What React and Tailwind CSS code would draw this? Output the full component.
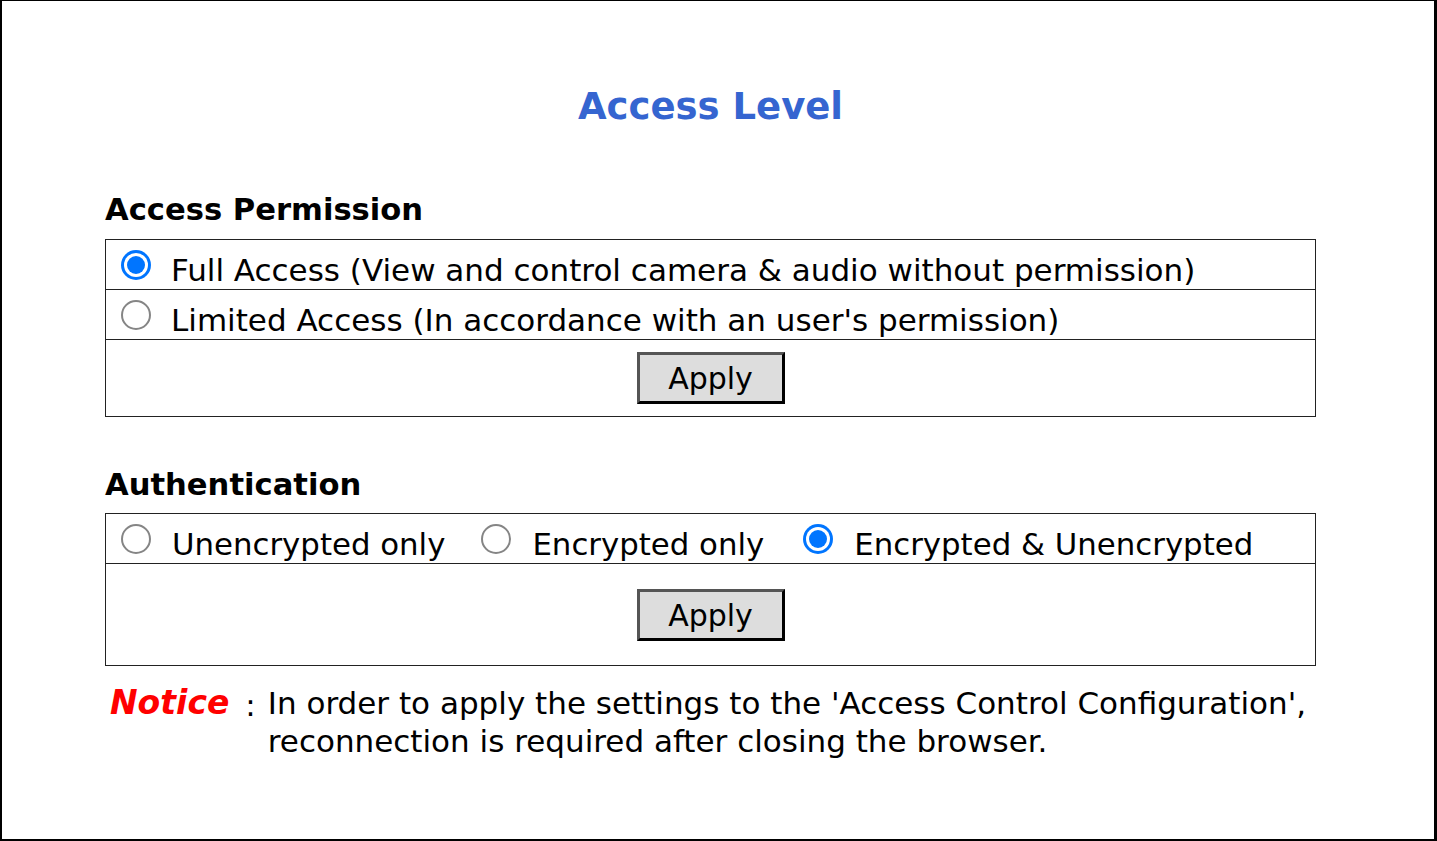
import React, { useState } from "react";

const font = { fontFamily: '"DejaVu Sans", Verdana, sans-serif' };

function Radio({ checked, onClick }) {
  return (
    <span
      onClick={onClick}
      className="inline-flex h-[30px] w-[30px] shrink-0 cursor-pointer items-center justify-center rounded-full"
    >
      {checked ? (
        <span className="flex h-[30px] w-[30px] items-center justify-center rounded-full bg-[#0075ff]">
          <span className="flex h-[24px] w-[24px] items-center justify-center rounded-full bg-white">
            <span className="h-[18px] w-[18px] rounded-full bg-[#0075ff]" />
          </span>
        </span>
      ) : (
        <span className="h-[30px] w-[30px] rounded-full border-2 border-[#858585] bg-white" />
      )}
    </span>
  );
}

function ApplyButton() {
  return (
    <button
      type="button"
      className="h-[52px] w-[148px] border-[3px] border-t-[#555] border-l-[#555] border-r-black border-b-black bg-[#dddddd] pt-[2px] text-[30px] leading-none text-black"
    >
      Apply
    </button>
  );
}

export default function App() {
  const [perm, setPerm] = useState("full");
  const [auth, setAuth] = useState("both");

  const authOptions = [
    { id: "plain", label: "Unencrypted only", space: "" },
    { id: "enc", label: "Encrypted only", space: "ml-[36px]" },
    { id: "both", label: "Encrypted & Unencrypted", space: "ml-[39px]" },
  ];

  return (
    <div
      style={font}
      className="h-[841px] w-[1437px] border-l-2 border-t border-r-[3px] border-b-2 border-black bg-white text-black"
    >
      <div className="ml-[103px] w-[1211px]">
        <h1 className="pt-[84px] text-center text-[37px] font-bold leading-[44px] text-[#3565d0]">
          Access Level
        </h1>

        <h2 className="mt-[61px] text-[30.6px] font-bold leading-[40px]">
          Access Permission
        </h2>
        <div className="mt-[9px] border border-[#222]">
          <div className="flex h-[50px] items-center gap-[20px] border-b border-[#222] pl-[15px]">
            <Radio checked={perm === "full"} onClick={() => setPerm("full")} />
            <span className="mt-[10px] text-[31px] leading-[40px]">
              Full Access (View and control camera &amp; audio without permission)
            </span>
          </div>
          <div className="flex h-[50px] items-center gap-[20px] border-b border-[#222] pl-[15px]">
            <Radio checked={perm === "limited"} onClick={() => setPerm("limited")} />
            <span className="mt-[10px] text-[31px] leading-[40px]">
              Limited Access (In accordance with an user's permission)
            </span>
          </div>
          <div className="flex h-[76px] items-center justify-center">
            <ApplyButton />
          </div>
        </div>

        <h2 className="mt-[48px] text-[30.6px] font-bold leading-[40px]">
          Authentication
        </h2>
        <div className="mt-[8px] border border-[#222]">
          <div className="flex h-[50px] items-center border-b border-[#222] pl-[15px]">
            {authOptions.map((o) => (
              <div key={o.id} className={`flex items-center gap-[21px] ${o.space}`}>
                <Radio checked={auth === o.id} onClick={() => setAuth(o.id)} />
                <span className="mt-[10px] text-[30.8px] leading-[40px]">{o.label}</span>
              </div>
            ))}
          </div>
          <div className="flex h-[101px] items-center justify-center">
            <ApplyButton />
          </div>
        </div>

        <div className="mt-[17px] flex items-start pl-[5px]">
          <span className="text-[33px] font-bold italic leading-[40px] text-[#ff0000]">
            Notice
          </span>
          <span className="ml-[16px] mt-[2px] text-[31px] leading-[40px]">:</span>
          <p className="ml-[12px] mt-[1px] text-[31px] leading-[38px]">
            In order to apply the settings to the 'Access Control Configuration',
            <br />
            reconnection is required after closing the browser.
          </p>
        </div>
      </div>
    </div>
  );
}
